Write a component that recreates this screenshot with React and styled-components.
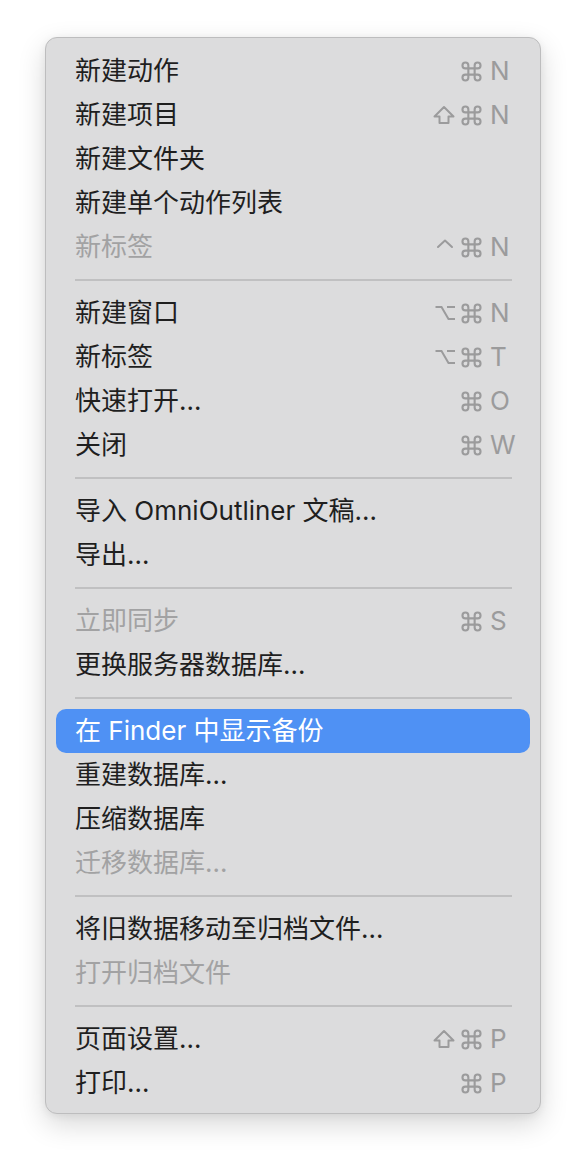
import React from "react";
import styled, { createGlobalStyle } from "styled-components";

const Global = createGlobalStyle`
  html, body { margin: 0; padding: 0; background: #ffffff; }
  body { font-family: "Inter", "Noto Sans CJK SC", sans-serif; }
`;

const Page = styled.div`
  padding: 37px 0 40px 45px;
`;

const Menu = styled.div`
  width: 474px;
  box-sizing: content-box;
  background: #dcdcdd;
  border: 1px solid #bdbdbe;
  border-radius: 12px;
  padding: 11px 10px 8px;
  box-shadow: 0 10px 28px rgba(0, 0, 0, 0.16), 0 2px 8px rgba(0, 0, 0, 0.06);
  display: flex;
  flex-direction: column;
`;

const Row = styled.div`
  height: 44px;
  display: flex;
  align-items: center;
  justify-content: space-between;
  padding: 0 20px 0 19px;
  border-radius: 10px;
  background: ${(p) => (p.$active ? "#4f91f4" : "transparent")};
  color: ${(p) => (p.$active ? "#ffffff" : p.$disabled ? "#a2a2a3" : "#1f1f1f")};
  font-family: "Inter", "Noto Sans CJK SC", sans-serif;
  font-size: 26px;
  letter-spacing: 0;
`;

const Label = styled.span`
  white-space: nowrap;
  line-height: 44px;
`;

const Separator = styled.div`
  height: 22px;
  display: flex;
  align-items: center;
  padding: 0 18px 0 19px;
  &::after {
    content: "";
    flex: 1;
    height: 2px;
    background: #c0c0c1;
  }
`;

const Shortcut = styled.span`
  display: flex;
  align-items: center;
  color: ${(p) => (p.$active ? "#ffffff" : "#9b9b9c")};
`;

const Mods = styled.span`
  display: flex;
  align-items: center;
  gap: 6px;
  margin-right: 8px;
`;

const Key = styled.span`
  width: 20px;
  font-family: "Inter", "Liberation Sans", sans-serif;
  font-size: 26px;
  line-height: 44px;
  white-space: nowrap;
`;

const Icon = styled.svg`
  display: block;
  fill: none;
  stroke: currentColor;
  stroke-width: 2;
  stroke-linejoin: round;
  stroke-linecap: round;
`;

const Cmd = () => (
  <Icon width="21" height="21" viewBox="0 0 20 20">
    <path d="M7 7V4.2A2.8 2.8 0 1 0 4.2 7H15.8A2.8 2.8 0 1 0 13 4.2V15.8A2.8 2.8 0 1 0 15.8 13H4.2A2.8 2.8 0 1 0 7 15.8Z" />
  </Icon>
);

const Shift = () => (
  <Icon width="22" height="20" viewBox="0 0 22 20">
    <path d="M11 2L20.5 11.5H15.5V18H6.5V11.5H1.5Z" />
  </Icon>
);

const Opt = () => (
  <Icon width="20" height="20" viewBox="0 0 20 20" style={{ strokeLinecap: "butt", strokeLinejoin: "miter" }}>
    <path d="M0.5 4H6.5L13.5 16H20M12 4H20" />
  </Icon>
);

const Ctrl = () => (
  <Icon width="20" height="20" viewBox="0 0 20 20">
    <path d="M3 10L10 3.5L17 10" />
  </Icon>
);

const modMap = { cmd: Cmd, shift: Shift, opt: Opt, ctrl: Ctrl };

const groups = [
  [
    { t: "新建动作", m: ["cmd"], k: "N" },
    { t: "新建项目", m: ["shift", "cmd"], k: "N" },
    { t: "新建文件夹" },
    { t: "新建单个动作列表" },
    { t: "新标签", m: ["ctrl", "cmd"], k: "N", d: true },
  ],
  [
    { t: "新建窗口", m: ["opt", "cmd"], k: "N" },
    { t: "新标签", m: ["opt", "cmd"], k: "T" },
    { t: "快速打开…", m: ["cmd"], k: "O" },
    { t: "关闭", m: ["cmd"], k: "W" },
  ],
  [{ t: "导入 OmniOutliner 文稿…" }, { t: "导出…" }],
  [
    { t: "立即同步", m: ["cmd"], k: "S", d: true },
    { t: "更换服务器数据库…" },
  ],
  [
    { t: "在 Finder 中显示备份", a: true },
    { t: "重建数据库…" },
    { t: "压缩数据库" },
    { t: "迁移数据库…", d: true },
  ],
  [{ t: "将旧数据移动至归档文件…" }, { t: "打开归档文件", d: true }],
  [
    { t: "页面设置…", m: ["shift", "cmd"], k: "P" },
    { t: "打印…", m: ["cmd"], k: "P" },
  ],
];

export default function App() {
  return (
    <>
      <Global />
      <Page>
        <Menu>
          {groups.map((g, gi) => (
            <React.Fragment key={gi}>
              {gi > 0 && <Separator />}
              {g.map((it, i) => (
                <Row key={i} $active={it.a} $disabled={it.d}>
                  <Label>{it.t}</Label>
                  {it.k && (
                    <Shortcut $active={it.a}>
                      <Mods>
                        {it.m.map((m) => {
                          const C = modMap[m];
                          return <C key={m} />;
                        })}
                      </Mods>
                      <Key>{it.k}</Key>
                    </Shortcut>
                  )}
                </Row>
              ))}
            </React.Fragment>
          ))}
        </Menu>
      </Page>
    </>
  );
}
